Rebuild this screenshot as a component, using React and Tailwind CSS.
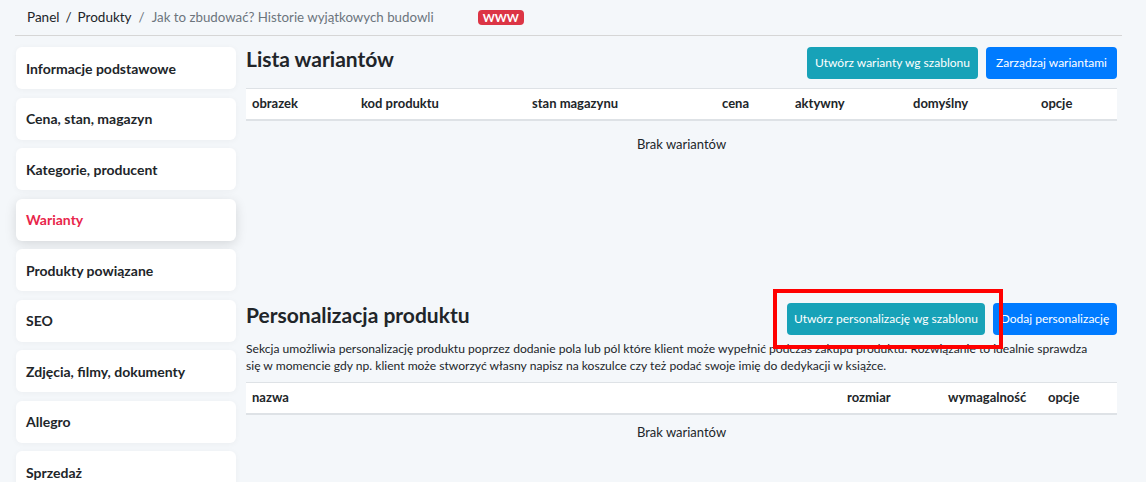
import React from 'react';

const menu = [
  'Informacje podstawowe',
  'Cena, stan, magazyn',
  'Kategorie, producent',
  'Warianty',
  'Produkty powiązane',
  'SEO',
  'Zdjęcia, filmy, dokumenty',
  'Allegro',
  'Sprzedaż',
];

const variantCols = [
  ['obrazek', 'w-[109px]'],
  ['kod produktu', 'w-[171px]'],
  ['stan magazynu', 'w-[190px]'],
  ['cena', 'w-[73px]'],
  ['aktywny', 'w-[118px]'],
  ['domyślny', 'w-[128px]'],
  ['opcje', 'w-[82px]'],
];

const personalCols = [
  ['nazwa', 'w-[595px]'],
  ['rozmiar', 'w-[101px]'],
  ['wymagalność', 'w-[100px]'],
  ['opcje', 'w-[75px]'],
];

const TableHead = ({ cols }) => (
  <div className="flex bg-white border-t border-[#dee2e6] border-b-2 h-[33px] items-center">
    {cols.map(([label, w]) => (
      <div key={label} className={`${w} pl-[6px] text-[13px] font-bold text-[#212529]`}>
        {label}
      </div>
    ))}
  </div>
);

const App = () => {
  const active = 'Warianty';

  return (
    <div
      className="w-[1146px] h-[482px] overflow-hidden bg-[#f4f7fa] text-[#212529]"
      style={{ fontFamily: 'Lato, "Noto Sans", sans-serif' }}
    >
      {/* Breadcrumb */}
      <div className="mx-[15px] w-[1107px] h-[36px] border-b border-[#d6d6d6] flex items-center pl-[12px] text-[13.5px]">
        <span>Panel</span>
        <span className="px-[6px]">/</span>
        <span>Produkty</span>
        <span className="px-[7px] text-[#6c757d]">/</span>
        <span className="text-[#6c757d] text-[13.3px]">Jak to zbudować? Historie wyjątkowych budowli</span>
        <span className="ml-[44px] bg-[#dc3545] text-white text-[11.5px] font-bold leading-[15px] px-[5px] rounded-[4px]">
          WWW
        </span>
      </div>

      <div className="flex pl-[16px] pt-[11px]">
        {/* Sidebar */}
        <div className="w-[220px] flex flex-col gap-[8.5px] shrink-0">
          {menu.map((item) => (
            <div
              key={item}
              className={`h-[42px] shrink-0 bg-white rounded-md px-[10px] flex items-center text-[14px] font-bold ${
                item === active
                  ? 'text-[#e8254a] shadow-[0_3px_12px_rgba(0,0,0,0.13)]'
                  : 'text-[#212529] shadow-[0_1px_6px_rgba(0,0,0,0.04)]'
              }`}
            >
              {item}
            </div>
          ))}
        </div>

        {/* Content */}
        <div className="ml-[10px] w-[871px]">
          {/* Lista wariantów */}
          <div className="h-[256px]">
            <div className="flex justify-between items-start">
              <h2 className="text-[21px] font-bold leading-[24px]">Lista wariantów</h2>
              <div className="flex gap-2">
                <button className="h-[32px] w-[171px] rounded-[4px] bg-[#17a2b8] text-white text-[12px]">
                  Utwórz warianty wg szablonu
                </button>
                <button className="h-[32px] w-[131px] rounded-[4px] bg-[#007bff] text-white text-[12px]">
                  Zarządzaj wariantami
                </button>
              </div>
            </div>
            <div className="mt-[9px]">
              <TableHead cols={variantCols} />
              <div className="text-center text-[13px] leading-[20px] pt-[13px]">Brak wariantów</div>
            </div>
          </div>

          {/* Personalizacja produktu */}
          <div>
            <div className="flex justify-between items-start">
              <h2 className="text-[21px] font-bold leading-[24px]">Personalizacja produktu</h2>
              <div className="flex gap-2">
                <div className="relative">
                  <button className="h-[32px] w-[198px] rounded-[4px] bg-[#17a2b8] text-white text-[12px]">
                    Utwórz personalizację wg szablonu
                  </button>
                  <div className="absolute -left-[14px] -top-[14px] -right-[18px] -bottom-[14px] border-4 border-[#ff0000] pointer-events-none" />
                </div>
                <button className="h-[32px] w-[124px] rounded-[4px] bg-[#007bff] text-white text-[12px]">
                  Dodaj personalizację
                </button>
              </div>
            </div>
            <p className="mt-[5px] text-[12.1px] leading-[17px]">
              Sekcja umożliwia personalizację produktu poprzez dodanie pola lub pól które klient może wypełnić podczas zakupu produktu. Rozwiązanie to idealnie sprawdza
              <br />
              się w momencie gdy np. klient może stworzyć własny napisz na koszulce czy też podać swoje imię do dedykacji w książce.
            </p>
            <div className="mt-[8px]">
              <TableHead cols={personalCols} />
              <div className="text-center text-[13px] leading-[20px] pt-[7px]">Brak wariantów</div>
            </div>
          </div>
        </div>
      </div>
    </div>
  );
};

export default App;
